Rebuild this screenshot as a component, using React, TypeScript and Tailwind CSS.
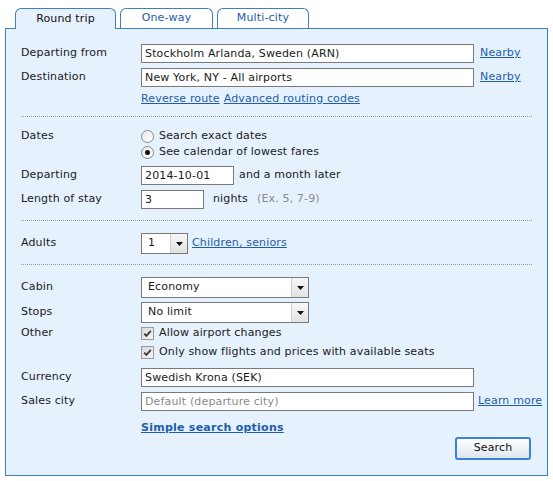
import React from 'react';

const link = 'text-[#1d5dab] underline';

function Tab({ label, active, w }: { label: string; active?: boolean; w: string }) {
    return (
        <div
            className={`${w} flex items-center justify-center rounded-t-[6px] border border-b-0 border-[#3f7ec4] ${
                active ? 'relative z-10 -mb-px h-[21px] bg-[#e5f1fd] text-[#111]' : 'h-[20px] bg-white text-[#1d5dab]'
            }`}
        >
            {label}
        </div>
    );
}

function TextBox({ value, w, placeholder }: { value?: string; w: string; placeholder?: string }) {
    return (
        <div className={`${w} h-[19px] border border-[#7a7a7a] bg-white px-[3px] flex items-center leading-none`}>
            {value ? <span>{value}</span> : <span className="text-[#8a8a8a]">{placeholder}</span>}
        </div>
    );
}

function Select({ value, w }: { value: string; w: string }) {
    return (
        <div className={`${w} h-[21px] flex border border-[#7a7a7a] bg-white`}>
            <div className="flex-1 flex items-center px-[6px]">{value}</div>
            <div className="w-[17px] border-l border-[#cfcfcf] bg-gradient-to-b from-[#f7f7f7] to-[#e2e2e2] flex items-center justify-center">
                <svg width="7" height="4" viewBox="0 0 7 4">
                    <path d="M0 0h7L3.5 4z" fill="#111" />
                </svg>
            </div>
        </div>
    );
}

function Radio({ checked, label }: { checked?: boolean; label: string }) {
    return (
        <div className="h-[16px] flex items-center gap-[5px]">
            <div className="w-[13px] h-[13px] rounded-full border border-[#8b8b8b] bg-gradient-to-br from-[#e8e8e8] to-white flex items-center justify-center">
                {checked && <div className="w-[5px] h-[5px] rounded-full bg-[#111]" />}
            </div>
            <span>{label}</span>
        </div>
    );
}

function Check({ label }: { label: string }) {
    return (
        <div className="h-[19px] flex items-center gap-[5px]">
            <div className="w-[13px] h-[13px] border border-[#9a9a9a] bg-gradient-to-br from-[#d9d9d9] to-[#f6f6f6] flex items-center justify-center">
                <svg width="9" height="9" viewBox="0 0 9 9">
                    <path d="M1.2 4.6l2.2 2.3L7.8 1.8" stroke="#3a3a3a" strokeWidth="1.8" fill="none" />
                </svg>
            </div>
            <span>{label}</span>
        </div>
    );
}

function Divider() {
    return <div className="mx-[15px] border-t border-dotted border-[#9a9a9a]" />;
}

export default function App() {
    return (
        <div className="pt-[8px] pl-[5px] font-['DejaVu_Sans',Verdana,sans-serif] text-[11px] tracking-[0.15px] text-[#1a1a1a]">
            <div className="ml-[10px] flex items-end gap-[4px]">
                <Tab label="Round trip" active w="w-[101px]" />
                <Tab label="One-way" w="w-[93px]" />
                <Tab label="Multi-city" w="w-[92px]" />
            </div>
            <div className="w-[543px] border border-[#3f7ec4] bg-[#e5f1fd] pt-[15px] pb-[15px]">
                <div className="pl-[15px]">
                    <div className="flex items-center h-[19px]">
                        <div className="w-[120px]">Departing from</div>
                        <TextBox value="Stockholm Arlanda, Sweden (ARN)" w="w-[333px]" />
                        <a className={`${link} ml-[6px]`}>Nearby</a>
                    </div>
                    <div className="flex items-center h-[19px] mt-[5px]">
                        <div className="w-[120px]">Destination</div>
                        <TextBox value="New York, NY - All airports" w="w-[333px]" />
                        <a className={`${link} ml-[6px]`}>Nearby</a>
                    </div>
                    <div className="flex items-center h-[14px] mt-[5px] pl-[120px] gap-[4px]">
                        <a className={link}>Reverse route</a>
                        <a className={link}>Advanced routing codes</a>
                    </div>
                </div>
                <div className="mt-[10px]">
                    <Divider />
                </div>

                <div className="pl-[15px] mt-[11px]">
                    <div className="flex">
                        <div className="w-[120px] h-[16px] flex items-center">Dates</div>
                        <div className="flex flex-col">
                            <Radio label="Search exact dates" />
                            <Radio label="See calendar of lowest fares" checked />
                        </div>
                    </div>
                    <div className="flex items-center h-[19px] mt-[6px]">
                        <div className="w-[120px]">Departing</div>
                        <TextBox value="2014-10-01" w="w-[93px]" />
                        <span className="ml-[5px]">and a month later</span>
                    </div>
                    <div className="flex items-center h-[19px] mt-[5px]">
                        <div className="w-[120px]">Length of stay</div>
                        <TextBox value="3" w="w-[63px]" />
                        <span className="ml-[9px]">nights</span>
                        <span className="ml-[9px] text-[#8a8a8a]">(Ex. 5, 7-9)</span>
                    </div>
                </div>
                <div className="mt-[11px]">
                    <Divider />
                </div>

                <div className="pl-[15px] mt-[12px]">
                    <div className="flex items-center h-[21px]">
                        <div className="w-[120px]">Adults</div>
                        <Select value="1" w="w-[47px]" />
                        <a className={`${link} ml-[4px]`}>Children, seniors</a>
                    </div>
                </div>
                <div className="mt-[10px]">
                    <Divider />
                </div>

                <div className="pl-[15px] mt-[12px]">
                    <div className="flex items-center h-[21px]">
                        <div className="w-[120px]">Cabin</div>
                        <Select value="Economy" w="w-[168px]" />
                    </div>
                    <div className="flex items-center h-[21px] mt-[4px]">
                        <div className="w-[120px]">Stops</div>
                        <Select value="No limit" w="w-[168px]" />
                    </div>
                    <div className="flex mt-[1px]">
                        <div className="w-[120px] h-[19px] flex items-center">Other</div>
                        <div className="flex flex-col">
                            <Check label="Allow airport changes" />
                            <Check label="Only show flights and prices with available seats" />
                        </div>
                    </div>
                    <div className="flex items-center h-[19px] mt-[6px]">
                        <div className="w-[120px]">Currency</div>
                        <TextBox value="Swedish Krona (SEK)" w="w-[333px]" />
                    </div>
                    <div className="flex items-center h-[19px] mt-[5px]">
                        <div className="w-[120px]">Sales city</div>
                        <TextBox placeholder="Default (departure city)" w="w-[333px]" />
                        <a className={`${link} ml-[4px]`}>Learn more</a>
                    </div>
                    <div className="flex items-center h-[14px] mt-[10px] pl-[120px]">
                        <a className={`${link} font-bold tracking-[0.25px]`}>Simple search options</a>
                    </div>
                </div>
                <div className="flex justify-end mr-[16px] mt-[2px]">
                    <button className="w-[76px] h-[23px] rounded-[3px] border-2 border-[#3a84d6] bg-gradient-to-b from-white to-[#dde6f1] text-[#111]">
                        Search
                    </button>
                </div>
            </div>
        </div>
    );
}
